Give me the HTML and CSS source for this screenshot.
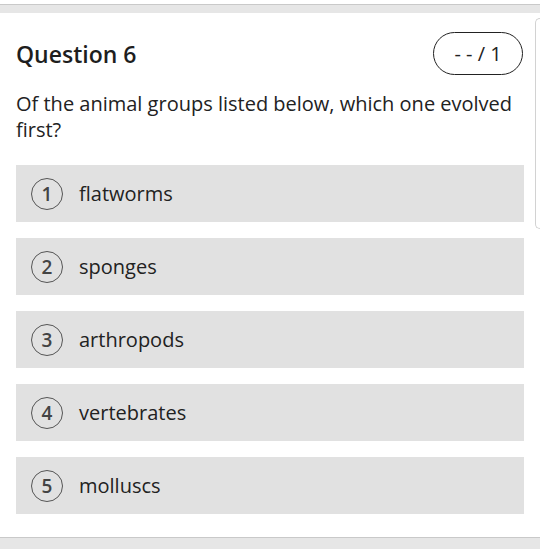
FILE: index.html
```html
<!DOCTYPE html>
<html lang="en">
<head>
    <meta charset="UTF-8">
    <meta name="viewport" content="width=device-width, initial-scale=1.0">
    <title>Question 6</title>
    <link rel="stylesheet" href="styles.css">
</head>
<body>

<div class="divider top"></div>

<div class="question-card">
    <div class="question-header">
        <h2 class="question-title">Question 6</h2>
        <div class="score-badge">- - / 1</div>
    </div>

    <p class="question-text">Of the animal groups listed below, which one evolved first?</p>

    <ul class="options">
        <li class="option"><span class="option-num">1</span><span class="option-label">flatworms</span></li>
        <li class="option"><span class="option-num">2</span><span class="option-label">sponges</span></li>
        <li class="option"><span class="option-num">3</span><span class="option-label">arthropods</span></li>
        <li class="option"><span class="option-num">4</span><span class="option-label">vertebrates</span></li>
        <li class="option"><span class="option-num">5</span><span class="option-label">molluscs</span></li>
    </ul>
</div>

<div class="divider"></div>

<!-- side panel peeking in from the right -->
<div class="side-panel"></div>

</body>
</html>
```

FILE: styles.css
```css
* { margin: 0; padding: 0; box-sizing: border-box; }
body { font-family: 'Open Sans', 'Noto Sans', sans-serif; background-color: #fff; color: #222; position: relative; overflow: hidden; height: 549px; }

/* gray strip between cards */
.divider { height: 12px; border-top: 1px solid #c9c9c9; background-color: #e6e6e6; }
.divider.top { height: 9px; margin-top: 4px; }

.question-card { padding: 19px 16px 23px; }

.question-header { display: flex; justify-content: space-between; align-items: center; }
.question-title { font-size: 23px; font-weight: 600; color: #1e1e1e; }
.score-badge {
    width: 90px;
    height: 43px;
    margin-right: 1px;
    border: 1.5px solid #222;
    border-radius: 22px;
    display: flex;
    align-items: center;
    justify-content: center;
    font-size: 20px;
    color: #222;
}

.question-text { margin-top: 16px; font-size: 20px; line-height: 26px; color: #222; }

/* Options */
.options { list-style: none; margin-top: 22px; display: flex; flex-direction: column; gap: 16px; }
.option {
    height: 57px;
    background-color: #e1e1e1;
    display: flex;
    align-items: center;
    padding-left: 15px;
}
.option-num {
    flex-shrink: 0;
    width: 32px;
    height: 32px;
    border: 1px solid #555;
    border-radius: 50%;
    display: flex;
    align-items: center;
    justify-content: center;
    font-size: 19px;
    font-weight: 600;
    color: #444;
}
.option-label { margin-left: 16px; font-size: 20px; color: #222; }

.side-panel {
    position: absolute;
    left: 535px;
    top: 18px;
    width: 5px;
    height: 211px;
    border: 1px solid #d2d2d2;
    border-right: none;
    border-radius: 7px 0 0 7px;
    background-color: #fff;
}
```
